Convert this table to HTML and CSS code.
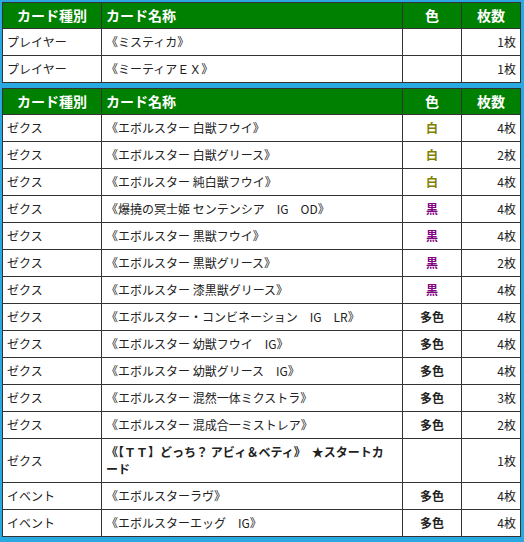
FILE: index.html
```html
<!DOCTYPE html>
<html lang="ja">
<head>
<meta charset="utf-8">
<title>デッキリスト</title>
<link rel="stylesheet" href="styles.css">
</head>
<body>
<div class="page">
<table class="deck">
<colgroup><col class="c-type"><col class="c-name"><col class="c-color"><col class="c-num"></colgroup>
<thead>
<tr><th class="t-type">カード種別</th><th class="t-name">カード名称</th><th class="t-color">色</th><th class="t-num">枚数</th></tr>
</thead>
<tbody>
<tr><td class="type">プレイヤー</td><td class="name">《ミスティカ》</td><td class="color"></td><td class="num">1枚</td></tr>
<tr><td class="type">プレイヤー</td><td class="name">《ミーティアＥＸ》</td><td class="color"></td><td class="num">1枚</td></tr>
</tbody>
</table>

<table class="deck second">
<colgroup><col class="c-type"><col class="c-name"><col class="c-color"><col class="c-num"></colgroup>
<thead>
<tr><th class="t-type">カード種別</th><th class="t-name">カード名称</th><th class="t-color">色</th><th class="t-num">枚数</th></tr>
</thead>
<tbody>
<tr><td class="type">ゼクス</td><td class="name">《エボルスター 白獣フウイ》</td><td class="color white">白</td><td class="num">4枚</td></tr>
<tr><td class="type">ゼクス</td><td class="name">《エボルスター 白獣グリース》</td><td class="color white">白</td><td class="num">2枚</td></tr>
<tr><td class="type">ゼクス</td><td class="name">《エボルスター 純白獣フウイ》</td><td class="color white">白</td><td class="num">4枚</td></tr>
<tr><td class="type">ゼクス</td><td class="name">《爆撓の冥士姫 センテンシア　IG　OD》</td><td class="color black">黒</td><td class="num">4枚</td></tr>
<tr><td class="type">ゼクス</td><td class="name">《エボルスター 黒獣フウイ》</td><td class="color black">黒</td><td class="num">4枚</td></tr>
<tr><td class="type">ゼクス</td><td class="name">《エボルスター 黒獣グリース》</td><td class="color black">黒</td><td class="num">2枚</td></tr>
<tr><td class="type">ゼクス</td><td class="name">《エボルスター 漆黒獣グリース》</td><td class="color black">黒</td><td class="num">4枚</td></tr>
<tr><td class="type">ゼクス</td><td class="name">《エボルスター・コンビネーション　IG　LR》</td><td class="color multi">多色</td><td class="num">4枚</td></tr>
<tr><td class="type">ゼクス</td><td class="name">《エボルスター 幼獣フウイ　IG》</td><td class="color multi">多色</td><td class="num">4枚</td></tr>
<tr><td class="type">ゼクス</td><td class="name">《エボルスター 幼獣グリース　IG》</td><td class="color multi">多色</td><td class="num">4枚</td></tr>
<tr><td class="type">ゼクス</td><td class="name">《エボルスター 混然一体ミクストラ》</td><td class="color multi">多色</td><td class="num">3枚</td></tr>
<tr><td class="type">ゼクス</td><td class="name">《エボルスター 混成合一ミストレア》</td><td class="color multi">多色</td><td class="num">2枚</td></tr>
<tr><td class="type">ゼクス</td><td class="name strong">《【ＴＴ】どっち？ アビィ＆ベティ》　★スタートカ<br>ード</td><td class="color"></td><td class="num">1枚</td></tr>
<tr><td class="type">イベント</td><td class="name">《エボルスターラヴ》</td><td class="color multi">多色</td><td class="num">4枚</td></tr>
<tr><td class="type">イベント</td><td class="name">《エボルスターエッグ　IG》</td><td class="color multi">多色</td><td class="num">4枚</td></tr>
</tbody>
</table>
</div>
</body>
</html>
```
FILE: styles.css
```css
html, body {
  margin: 0;
  padding: 0;
  background: #29a9e1;
}
.page {
  padding: 2px;
  font-family: "Noto Sans CJK JP", sans-serif;
  font-size: 12px;
  color: #222;
}
.deck {
  width: 518px;
  table-layout: fixed;
  border-collapse: collapse;
  background: #fff;
  border: 1px solid #333;
}
.deck.second {
  margin-top: 5px;
}
.c-type { width: 99px; }
.c-name { width: 301px; }
.c-color { width: 59px; }
.c-num { width: 59px; }
.deck th, .deck td {
  border: 1px solid #333;
  line-height: 17px;
  vertical-align: middle;
}
.deck th {
  background: #008000;
  color: #fff;
  font-size: 14px;
  font-weight: bold;
  padding: 4px 4px;
}
.t-type, .t-color, .t-num { text-align: center; }
.t-name { text-align: left; }
.deck td {
  padding: 4px 4px 5px;
}
.type { padding-left: 3px; }
.name { padding-left: 4px; }
.name.strong { font-weight: bold; }
.color {
  text-align: center;
  font-weight: bold;
}
.color.white { color: #808000; }
.color.black { color: #800080; }
.color.multi { color: #222; }
.num { text-align: right; }
```
